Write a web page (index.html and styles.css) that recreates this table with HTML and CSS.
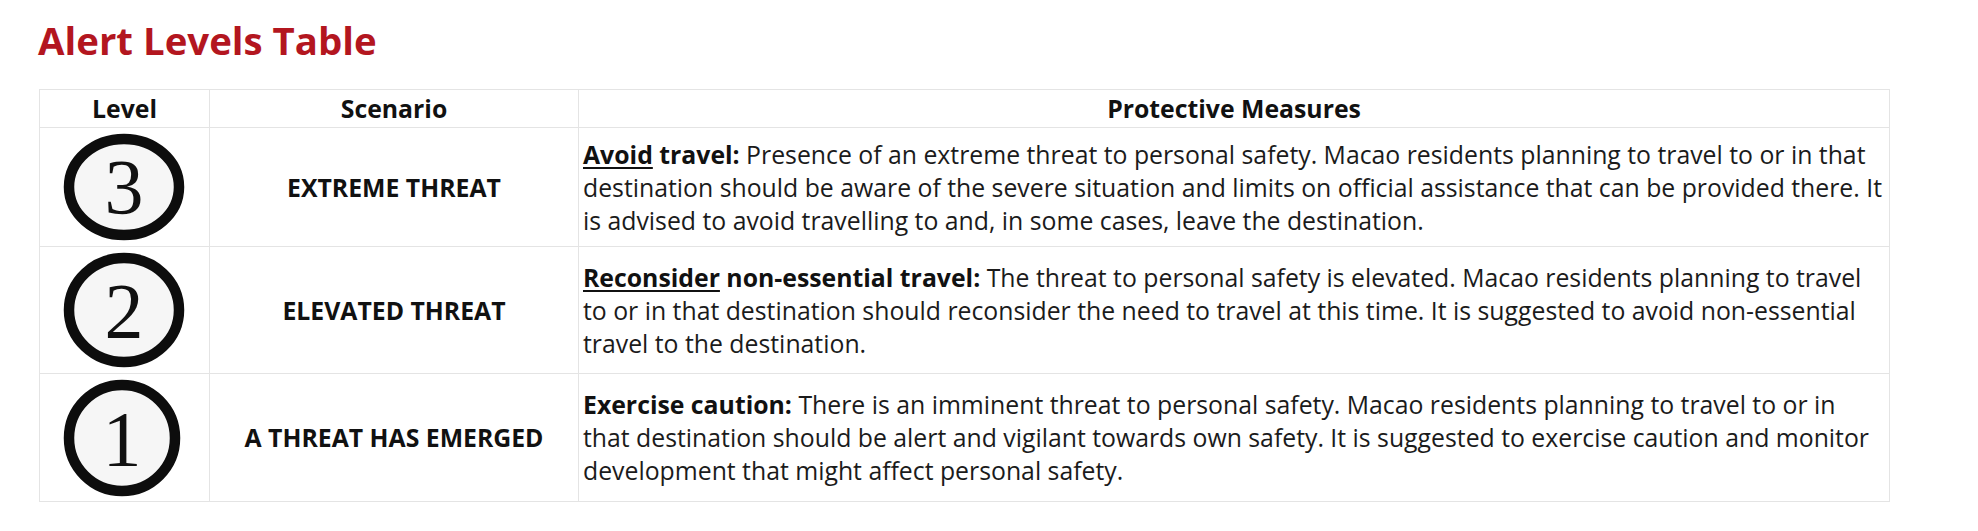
FILE: index.html
```html
<!DOCTYPE html>
<html lang="en">
<head>
<meta charset="utf-8">
<title>Alert Levels Table</title>
<link rel="stylesheet" href="styles.css">
</head>
<body>
<main class="page">
  <h1 class="title">Alert Levels Table</h1>
  <table class="alerts">
    <colgroup>
      <col class="col-level">
      <col class="col-scenario">
      <col class="col-measures">
    </colgroup>
    <thead>
      <tr>
        <th>Level</th>
        <th>Scenario</th>
        <th>Protective Measures</th>
      </tr>
    </thead>
    <tbody>
      <tr>
        <td class="level">
          <svg class="badge badge-3" viewBox="0 0 124 110" width="124" height="110" aria-label="Level 3">
            <ellipse cx="61" cy="55" rx="55" ry="48" class="ring"/>
            <text x="61" y="81" class="digit">3</text>
          </svg>
        </td>
        <td class="scenario">EXTREME THREAT</td>
        <td class="measures"><strong><u>Avoid</u> travel:</strong> Presence of an extreme threat to personal safety. Macao residents planning to travel to or in that<br>destination should be aware of the severe situation and limits on official assistance that can be provided there. It<br>is advised to avoid travelling to and, in some cases, leave the destination.</td>
      </tr>
      <tr>
        <td class="level">
          <svg class="badge badge-2" viewBox="0 0 124 118" width="124" height="118" aria-label="Level 2">
            <ellipse cx="61" cy="59" rx="55" ry="52" class="ring"/>
            <text x="61" y="86" class="digit">2</text>
          </svg>
        </td>
        <td class="scenario">ELEVATED THREAT</td>
        <td class="measures"><strong><u>Reconsider</u> non-essential travel:</strong> The threat to personal safety is elevated. Macao residents planning to travel<br>to or in that destination should reconsider the need to travel at this time. It is suggested to avoid non-essential<br>travel to the destination.</td>
      </tr>
      <tr>
        <td class="level">
          <svg class="badge badge-1" viewBox="0 0 124 119" width="124" height="119" aria-label="Level 1">
            <ellipse cx="59" cy="60" rx="53" ry="53" class="ring"/>
            <text x="59" y="87" class="digit">1</text>
          </svg>
        </td>
        <td class="scenario">A THREAT HAS EMERGED</td>
        <td class="measures"><strong>Exercise caution:</strong> There is an imminent threat to personal safety. Macao residents planning to travel to or in<br>that destination should be alert and vigilant towards own safety. It is suggested to exercise caution and monitor<br>development that might affect personal safety.</td>
      </tr>
    </tbody>
  </table>
</main>
</body>
</html>
```

FILE: styles.css
```css
html, body {
  margin: 0;
  padding: 0;
  background: #ffffff;
}

.page {
  padding: 16px 0 0 38px;
  font-family: "Open Sans", "Noto Sans", "Liberation Sans", sans-serif;
  color: #1b1b1b;
}

.title {
  margin: 0 0 25px 0;
  font-size: 38.4px;
  line-height: 48px;
  font-weight: 700;
  color: #b3161f;
}

.alerts {
  border-collapse: collapse;
  table-layout: fixed;
  width: 1851px;
  margin-left: 1px;
  font-size: 24.8px;
  line-height: 33px;
}

.col-level { width: 170px; }
.col-scenario { width: 369px; }

.alerts th,
.alerts td {
  border: 1px solid #e4e4e4;
}

.alerts th {
  padding: 2px 4px;
  font-weight: 700;
  text-align: center;
  color: #111111;
}

.alerts td {
  vertical-align: middle;
}

.level {
  padding: 4px 0;
}

.badge {
  display: block;
  margin: 0 auto;
}

.ring {
  fill: #f6f6f6;
  stroke: #0d0d0d;
  stroke-width: 10.5;
}

.digit {
  font-family: "Liberation Serif", "DejaVu Serif", serif;
  font-size: 78px;
  text-anchor: middle;
  fill: #111111;
}

.scenario {
  text-align: center;
  font-weight: 700;
  color: #111111;
  padding: 0 4px;
}

.measures {
  padding: 0 4px;
  white-space: nowrap;
}

.measures strong {
  font-weight: 700;
  color: #111111;
}

.measures u {
  text-decoration-thickness: 2px;
  text-underline-offset: 3px;
}
```
